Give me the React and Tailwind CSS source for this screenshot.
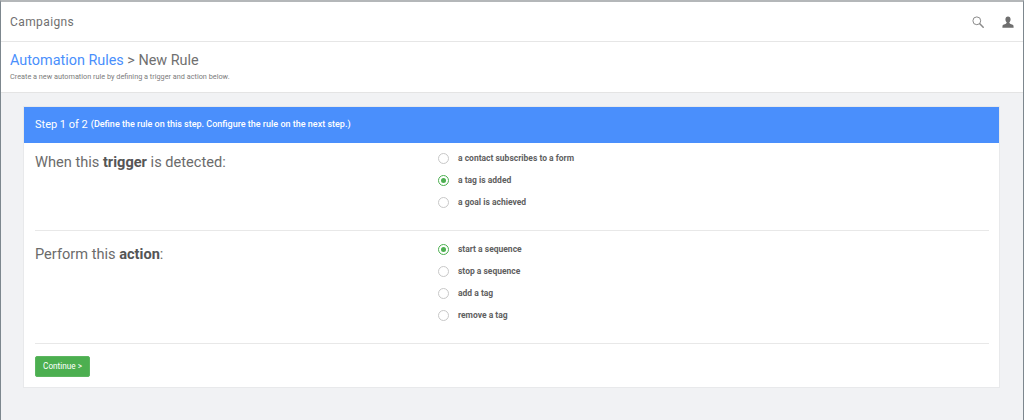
const triggers = [
  { label: "a contact subscribes to a form" },
  { label: "a tag is added", checked: true },
  { label: "a goal is achieved" },
];

const actions = [
  { label: "start a sequence", checked: true },
  { label: "stop a sequence" },
  { label: "add a tag" },
  { label: "remove a tag" },
];

const RadioRow = ({ label, checked }) => (
  <div className="flex h-[22px] items-center">
    {checked ? (
      <span className="flex h-[11px] w-[11px] items-center justify-center rounded-full border-[1.5px] border-[#4caf50]">
        <span className="h-[5px] w-[5px] rounded-full bg-[#4caf50]" />
      </span>
    ) : (
      <span className="h-[11px] w-[11px] rounded-full border border-[#c8c8c8] bg-white" />
    )}
    <span className="ml-[9px] text-[8.5px] font-bold text-[#5f5f5f]">{label}</span>
  </div>
);

const SearchIcon = () => (
  <svg width="12" height="12" viewBox="0 0 12 12" fill="none" stroke="#8a8a8a">
    <circle cx="4.8" cy="4.8" r="3.9" strokeWidth="1" />
    <path d="M7.8 7.8L11.2 11.2" strokeWidth="1.5" strokeLinecap="round" />
  </svg>
);

const UserIcon = () => (
  <svg width="12" height="12" viewBox="0 0 13 13" fill="#6e6e6e">
    <path d="M6.5 0.5C4.7 0.5 3.7 1.8 3.7 3.6C3.7 5 4.2 6.2 5 6.9C5.1 7.6 4.9 8 4.2 8.3C2.7 8.9 1 9.3 0.6 10.3L0.4 12.6H12.6L12.4 10.3C12 9.3 10.3 8.9 8.8 8.3C8.1 8 7.9 7.6 8 6.9C8.8 6.2 9.3 5 9.3 3.6C9.3 1.8 8.3 0.5 6.5 0.5Z" />
  </svg>
);

const App = () => {
  return (
    <div className="flex h-[420px] w-[1024px] flex-col overflow-hidden border-t-2 border-l border-r border-t-[#b4b7b9] border-l-[#7d878e] border-r-[#7d878e] bg-[#f1f2f4] font-['Roboto',sans-serif]">
      <header className="flex h-[40px] shrink-0 items-center justify-between border-b border-[#e6e6e6] bg-white pl-[9px] pr-[9px]">
        <span className="text-[12px] tracking-[0.4px] text-[#707070]">Campaigns</span>
        <div className="flex items-center gap-[18px]">
          <SearchIcon />
          <UserIcon />
        </div>
      </header>

      <div className="h-[51px] shrink-0 border-b border-[#e4e4e4] bg-white pl-[9px] pt-[8px]">
        <h1 className="text-[14.4px] leading-[21px] text-[#707070]">
          <span className="text-[#4a8ffc]">Automation Rules</span> &gt; New Rule
        </h1>
        <p className="mt-[1px] text-[7.3px] leading-[10px] text-[#7c7c7c]">
          Create a new automation rule by defining a trigger and action below.
        </p>
      </div>

      <main className="flex-1 pl-[23px] pr-[24px] pt-[14px]">
        <section className="h-[280px] bg-white shadow-[0_0_0_1px_#e8e9eb]">
          <div className="flex h-[36px] items-center bg-[#4a8ffc] px-[11px] text-white">
            <span className="text-[11px]">Step 1 of 2</span>
            <span className="ml-[3px] text-[9px] font-medium">
              (Define the rule on this step. Configure the rule on the next step.)
            </span>
          </div>

          <div className="pl-[11px] pr-[10px]">
            <div className="flex h-[88px] border-b border-[#e8e8e8] pt-[4px]">
              <h2 className="w-[403px] pt-[5px] text-[14.6px] leading-[20px] text-[#6b6b6b]">
                When this <b className="text-[#555]">trigger</b> is detected:
              </h2>
              <div>
                {triggers.map((item) => (
                  <RadioRow key={item.label} {...item} />
                ))}
              </div>
            </div>

            <div className="flex h-[113px] border-b border-[#e8e8e8] pt-[7px]">
              <h2 className="w-[403px] pt-[6px] text-[14.6px] leading-[20px] text-[#6b6b6b]">
                Perform this <b className="text-[#555]">action</b>:
              </h2>
              <div>
                {actions.map((item) => (
                  <RadioRow key={item.label} {...item} />
                ))}
              </div>
            </div>

            <button className="mt-[12px] flex h-[21px] w-[55px] items-center justify-center rounded-[2px] border border-[#5cb660] bg-[#4caf50] text-[8.2px] text-white">
              Continue &gt;
            </button>
          </div>
        </section>
      </main>
    </div>
  );
};

export default App;
